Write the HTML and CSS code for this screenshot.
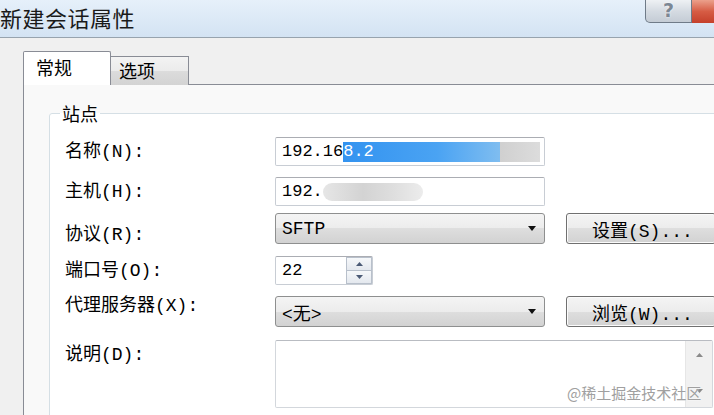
FILE: index.html
```html
<!DOCTYPE html>
<html lang="zh-CN">
<head>
  <meta charset="UTF-8">
  <title>新建会话属性</title>
  <link rel="stylesheet" href="styles.css">
</head>
<body>
  <div class="window">
    <div class="titlebar">
      <span class="title">新建会话属性</span>
      <div class="caption">
        <span class="btn-help">?</span>
        <span class="btn-close"></span>
      </div>
    </div>

    <div class="client">
      <div class="tabs">
        <div class="tab active">常规</div>
        <div class="tab">选项</div>
      </div>
      <div class="page">
        <fieldset class="group">
          <legend>站点</legend>
          <div class="form">
            <label class="lbl">名称(N):</label>
            <div class="edit">192.16<span class="sel">8.2</span><span class="smudge"></span></div>

            <label class="lbl">主机(H):</label>
            <div class="edit">192.<span class="smudge wide"></span></div>

            <label class="lbl lbl-low">协议(R):</label>
            <div class="combo">
              <span>SFTP</span>
              <svg width="8" height="5" viewBox="0 0 8 5"><path d="M0 0h8L4 5z" fill="#111"/></svg>
            </div>
            <button class="btn">设置(S)...</button>

            <label class="lbl">端口号(O):</label>
            <div class="spin">
              <span>22</span>
              <div class="spin-btns">
                <span class="spin-up"><svg width="7" height="4" viewBox="0 0 7 4"><path d="M0 4h7L3.5 0z" fill="#4b5a75"/></svg></span>
                <span class="spin-down"><svg width="7" height="4" viewBox="0 0 7 4"><path d="M0 0h7L3.5 4z" fill="#4b5a75"/></svg></span>
              </div>
            </div>

            <label class="lbl lbl-high">代理服务器(X):</label>
            <div class="combo">
              <span>&lt;无&gt;</span>
              <svg width="8" height="5" viewBox="0 0 8 5"><path d="M0 0h8L4 5z" fill="#111"/></svg>
            </div>
            <button class="btn">浏览(W)...</button>

            <label class="lbl">说明(D):</label>
            <div class="memo">
              <div class="memo-text"></div>
              <div class="scrollbar">
                <svg width="7" height="4" viewBox="0 0 7 4"><path d="M0 4h7L3.5 0z" fill="#8a8a8a"/></svg>
                <svg width="7" height="4" viewBox="0 0 7 4"><path d="M0 0h7L3.5 4z" fill="#8a8a8a"/></svg>
              </div>
            </div>
          </div>
        </fieldset>
      </div>
    </div>

    <div class="watermark">@稀土掘金技术社区</div>
  </div>
</body>
</html>
```

FILE: styles.css
```css
html, body {
  margin: 0;
  padding: 0;
  height: 415px;
  overflow: hidden;
}
body {
  background: #f0f0f0;
  font-family: "Liberation Mono", "Noto Sans CJK SC", monospace;
  font-size: 18px;
  color: #000;
}
.window {
  position: relative;
  width: 714px;
  height: 415px;
}
.titlebar {
  display: flex;
  height: 37px;
  background: linear-gradient(#e6f0fa, #d3e3f3);
  border-bottom: 1px solid #97a3ae;
  overflow: hidden;
}
.title {
  font-family: "Noto Sans CJK SC", sans-serif;
  font-size: 22px;
  letter-spacing: 0.5px;
  line-height: 34px;
  color: #1a1a1a;
}
.caption {
  display: flex;
  margin-left: auto;
  align-items: flex-start;
}
.btn-help {
  width: 45px;
  height: 22px;
  border: 1px solid #6f7b88;
  border-top: none;
  border-radius: 0 0 0 5px;
  background: linear-gradient(#eef1f4, #d5dbe2 50%, #c4ccd5);
  color: #7c8794;
  font-family: "DejaVu Sans", sans-serif;
  font-size: 19px;
  font-weight: bold;
  line-height: 20px;
  text-align: center;
  text-shadow: 0 0 2px #fff;
}
.btn-close {
  width: 22px;
  height: 23px;
  background: linear-gradient(#eba08b, #d65c44 50%, #c5402b);
}

.client {
  padding: 13px 0 0 23px;
}
.tabs {
  display: flex;
  align-items: flex-end;
  height: 34px;
}
.tab {
  box-sizing: border-box;
  font-family: "Noto Sans CJK SC", sans-serif;
  font-size: 18px;
  line-height: 22px;
  border: 1px solid #898c95;
  border-bottom: none;
}
.tab.active {
  position: relative;
  z-index: 1;
  width: 88px;
  height: 34px;
  padding: 4px 0 0 12px;
  background: #fff;
  border-radius: 2px 2px 0 0;
}
.tab:not(.active) {
  width: 79px;
  height: 29px;
  margin-left: -1px;
  padding: 2px 0 0 8px;
  background: linear-gradient(#f3f3f3, #ebebeb 50%, #dcdcdc 50%, #d3d3d3);
}
.page {
  margin-top: -1px;
  margin-right: -60px;
  height: 400px;
  padding: 17px 0 0 25px;
  background: #f9f9f9;
  border-top: 1px solid #898c95;
  border-left: 1px solid #898c95;
}
.group {
  margin: 0;
  padding: 13px 0 20px 15px;
  background: #fff;
  border: 1px solid #d5dfe5;
  border-radius: 3px;
}
.group legend {
  margin-left: -5px;
  padding: 0 2px;
  font-family: "Noto Sans CJK SC", sans-serif;
  font-size: 18px;
  line-height: 22px;
}

.form {
  display: grid;
  grid-template-columns: 210px 270px 21px 150px;
  grid-template-rows: 40px 36px 43px 40px 44px 68px;
  align-items: start;
}
.lbl {
  grid-column: 1;
  margin-top: 4px;
  line-height: 22px;
  white-space: nowrap;
}
.lbl-low { margin-top: 11px; }
.lbl-high { margin-top: -1px; }

.edit {
  grid-column: 2;
  box-sizing: border-box;
  height: 29px;
  padding-left: 6px;
  display: flex;
  align-items: center;
  font-size: 17px;
  background: #fff;
  border: 1px solid #c8cdd4;
  border-top-color: #abadb3;
  border-radius: 2px;
  white-space: nowrap;
  overflow: hidden;
}
.sel {
  display: inline-block;
  width: 157px;
  height: 20px;
  line-height: 20px;
  background: linear-gradient(90deg, #3393f0, #4aa3f3 60%, #7fbdf0);
  color: #fff;
}
.smudge {
  display: inline-block;
  width: 40px;
  height: 20px;
  background: linear-gradient(90deg, #d0d0d0, #dcdcdc);
}
.smudge.wide {
  width: 100px;
  height: 18px;
  border-radius: 9px;
  background: linear-gradient(90deg, #e6e6e6, #d3d3d3 40%, #dedede 70%, #ececec);
}

.combo {
  grid-column: 2;
  box-sizing: border-box;
  height: 31px;
  padding: 0 8px 0 6px;
  display: flex;
  align-items: center;
  justify-content: space-between;
  border: 1px solid #8e8f8f;
  border-radius: 3px;
  background: linear-gradient(#f4f4f4, #ececec 50%, #dedede 50%, #d2d2d2);
}
.btn {
  grid-column: 4;
  box-sizing: border-box;
  width: 150px;
  height: 31px;
  padding: 0 0 0 25px;
  text-align: left;
  font-family: inherit;
  font-size: 18px;
  color: #000;
  border: 1px solid #707070;
  border-radius: 3px;
  background: linear-gradient(#f4f4f4, #ececec 50%, #dedede 50%, #d2d2d2);
  box-shadow: inset 0 0 0 1px #fbfbfb;
}

.spin {
  grid-column: 2;
  box-sizing: border-box;
  width: 98px;
  height: 29px;
  display: flex;
  align-items: center;
  justify-content: space-between;
  padding-left: 6px;
  font-size: 17px;
  background: #fff;
  border: 1px solid #c8cdd4;
  border-top-color: #abadb3;
  border-radius: 2px;
}
.spin-btns {
  display: flex;
  flex-direction: column;
  width: 26px;
  height: 27px;
}
.spin-btns span {
  flex: 1;
  display: flex;
  align-items: center;
  justify-content: center;
  border: 1px solid #b8c0cb;
  background: linear-gradient(#f6f8fa, #e4e8ee);
}
.spin-down {
  border-top: none !important;
}

.memo {
  grid-column: 2 / 5;
  box-sizing: border-box;
  width: 438px;
  height: 68px;
  display: flex;
  background: #fff;
  border: 1px solid #d3d7dc;
  border-top-color: #b9bcc2;
  border-radius: 2px;
}
.memo-text {
  flex: 1;
}
.scrollbar {
  width: 27px;
  display: flex;
  flex-direction: column;
  align-items: center;
  justify-content: space-between;
  padding: 12px 0 14px;
  box-sizing: border-box;
  background: #f1f1f1;
  border-left: 1px solid #e6e6e6;
}

.watermark {
  position: absolute;
  left: 567px;
  top: 383px;
  font-family: "Noto Sans CJK SC", sans-serif;
  font-size: 15px;
  line-height: 20px;
  color: #a0a0a0;
  text-shadow: 0 0 2px #fff;
}
```
